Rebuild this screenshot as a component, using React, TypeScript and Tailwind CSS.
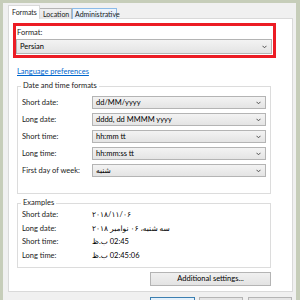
import React from 'react';

const font = { fontFamily: 'Lato, "DejaVu Sans", sans-serif' };

function Chevron() {
  return (
    <svg width="5" height="4" viewBox="0 0 5 4" className="shrink-0">
      <path d="M0.5 0.8 L2.5 2.8 L4.5 0.8" fill="none" stroke="#505050" strokeWidth="1" />
    </svg>
  );
}

function Combo({ value, className }: { value: string; className: string }) {
  return (
    <div
      className={`flex items-center justify-between border border-[#b4b4b4] bg-gradient-to-b from-[#f3f3f3] to-[#e4e4e4] pl-[3px] pr-[4px] text-[7.5px] leading-none text-black ${className}`}
    >
      <span>{value}</span>
      <Chevron />
    </div>
  );
}

const formatRows = [
  { label: 'Short date:', value: 'dd/MM/yyyy' },
  { label: 'Long date:', value: 'dddd, dd MMMM yyyy' },
  { label: 'Short time:', value: 'hh:mm tt' },
  { label: 'Long time:', value: 'hh:mm:ss tt' },
  { label: 'First day of week:', value: 'شنبه' },
];

// examples are shown in right-to-left reading order, as Windows does for fa-IR
const exampleRows = [
  { label: 'Short date:', value: '۲۰۱۸/۱۱/۰۶' },
  { label: 'Long date:', value: 'سه شنبه، ۰۶ نوامبر ۲۰۱۸' },
  { label: 'Short time:', value: '02:45 ب.ظ' },
  { label: 'Long time:', value: '02:45:06 ب.ظ' },
];

export default function App() {
  return (
    <div className="w-[300px] h-[300px] overflow-hidden bg-[#c6cdb9] pt-[3px] pl-[3px] pr-[4px]" style={font}>
      <div className="h-full bg-[#f0f0f0] pl-[5px] pr-[3px] pt-[2px] text-[7.5px] text-[#1a1a1a]">
        {/* Tabs */}
        <div className="flex items-end h-[14px] text-[7px]">
          <div className="relative z-10 h-[14px] w-[32px] border border-b-0 border-[#d9d9d9] bg-white pl-[3px] pt-[1px] leading-[10px]">
            Formats
          </div>
          <div className="h-[11px] w-[32px] border border-b-0 border-l-0 border-[#b4b4b4] bg-gradient-to-b from-[#f0f0f0] to-[#e5e5e5] pl-[3px] leading-[10px]">
            Location
          </div>
          <div className="h-[11px] w-[45px] border border-b-0 border-[#8cbbe8] bg-gradient-to-b from-[#eef5fc] to-[#dfedfb] pl-[2px] leading-[10px]">
            Administrative
          </div>
        </div>

        {/* Panel */}
        <div className="-mt-px w-[285px] border border-[#d9d9d9] bg-white pb-[5px]">
          <div className="mt-[4px] ml-[4px] w-[263px] h-[35px] border-[3px] border-[#ec1c24]">
            <div className="h-[13px] leading-[13px] pl-[1px]">Format:</div>
            <Combo value="Persian" className="h-[15px] w-[256px]" />
          </div>

          <div className="mt-[9px] ml-[8px] leading-[10px] text-[#0066cc] underline">Language preferences</div>

          <fieldset className="mt-[4px] ml-[8px] w-[254px] border border-[#dcdcdc] pb-[16px]">
            <legend className="ml-[3px] px-[2px] leading-[10px]">Date and time formats</legend>
            <div className="flex flex-col gap-[4px] pt-[5px]">
              {formatRows.map((r) => (
                <div key={r.label} className="flex items-center h-[13px]">
                  <div className="w-[74px] pl-[4px]">{r.label}</div>
                  <Combo value={r.value} className="h-[13px] w-[174px]" />
                </div>
              ))}
            </div>
          </fieldset>

          <fieldset className="mt-[4px] ml-[8px] w-[254px] border border-[#dcdcdc] pb-[5px]">
            <legend className="ml-[3px] px-[2px] leading-[10px]">Examples</legend>
            {exampleRows.map((r) => (
              <div key={r.label} className="flex items-center h-[13.5px]">
                <div className="w-[74px] pl-[4px]">{r.label}</div>
                <div dir="rtl" className="text-black">{r.value}</div>
              </div>
            ))}
          </fieldset>

          <button className="mt-[4px] ml-[141px] block h-[14px] w-[121px] border border-[#b4b4b4] bg-gradient-to-b from-[#f0f0f0] to-[#e3e3e3] text-[7.5px] leading-none text-black">
            Additional settings...
          </button>
        </div>

        {/* Dialog buttons */}
        <div className="mt-[5px] ml-[142px] flex">
          <div className="h-[20px] w-[45px] border border-[#3c7fb1] bg-[#e5f1fb]" />
          <div className="ml-[4px] h-[20px] w-[44px] border border-[#b4b4b4] bg-[#e5e5e5]" />
          <div className="ml-[5px] h-[20px] w-[44px] border border-[#b4b4b4] bg-[#e5e5e5]" />
        </div>
      </div>
    </div>
  );
}
